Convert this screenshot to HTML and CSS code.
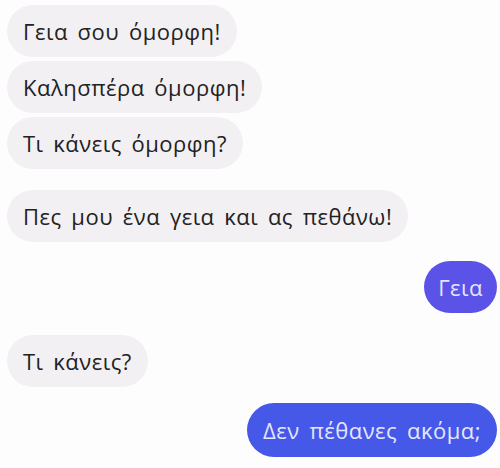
FILE: index.html
```html
<!DOCTYPE html>
<html lang="el">
<head>
  <meta charset="UTF-8">
  <meta name="viewport" content="width=device-width, initial-scale=1.0">
  <title>Chat</title>
  <link rel="stylesheet" href="styles.css">
</head>
<body>
  <div class="chat">
    <div class="group">
      <div class="bubble in">Γεια σου όμορφη!</div>
      <div class="bubble in">Καλησπέρα όμορφη!</div>
      <div class="bubble in">Τι κάνεις όμορφη?</div>
    </div>
    <div class="bubble in gap-1">Πες μου ένα γεια και ας πεθάνω!</div>
    <div class="bubble out violet gap-2">Γεια</div>
    <div class="bubble in gap-3">Τι κάνεις?</div>
    <div class="bubble out gap-4">Δεν πέθανες ακόμα;</div>
  </div>
</body>
</html>
```

FILE: styles.css
```css
body {
  margin: 0;
  background-color: #fdfdfd;
  font-family: "Open Sans", "Noto Sans", sans-serif;
}

.chat {
  display: flex;
  flex-direction: column;
  align-items: flex-start;
  padding: 5px 3px 0 7px;
}

.group {
  display: flex;
  flex-direction: column;
  align-items: flex-start;
  gap: 4px;
}

.bubble {
  height: 52px;
  box-sizing: border-box;
  display: flex;
  align-items: center;
  padding: 0 16px;
  border-radius: 26px;
  font-size: 22px;
  letter-spacing: 0.5px;
  word-spacing: 3.5px;
  white-space: nowrap;
}

.in {
  background-color: #f3f0f4;
  color: #222;
}

.out {
  align-self: flex-end;
  background-color: #4658e7;
  color: #e4e6ff;
  height: 54px;
  border-radius: 27px;
}

.violet {
  background-color: #5b53e8;
  height: 52px;
  padding: 0 14px;
}

.gap-1 { margin-top: 21px; }
.gap-2 { margin-top: 19px; }
.gap-3 { margin-top: 22px; }
.gap-4 { margin-top: 16px; }
```
